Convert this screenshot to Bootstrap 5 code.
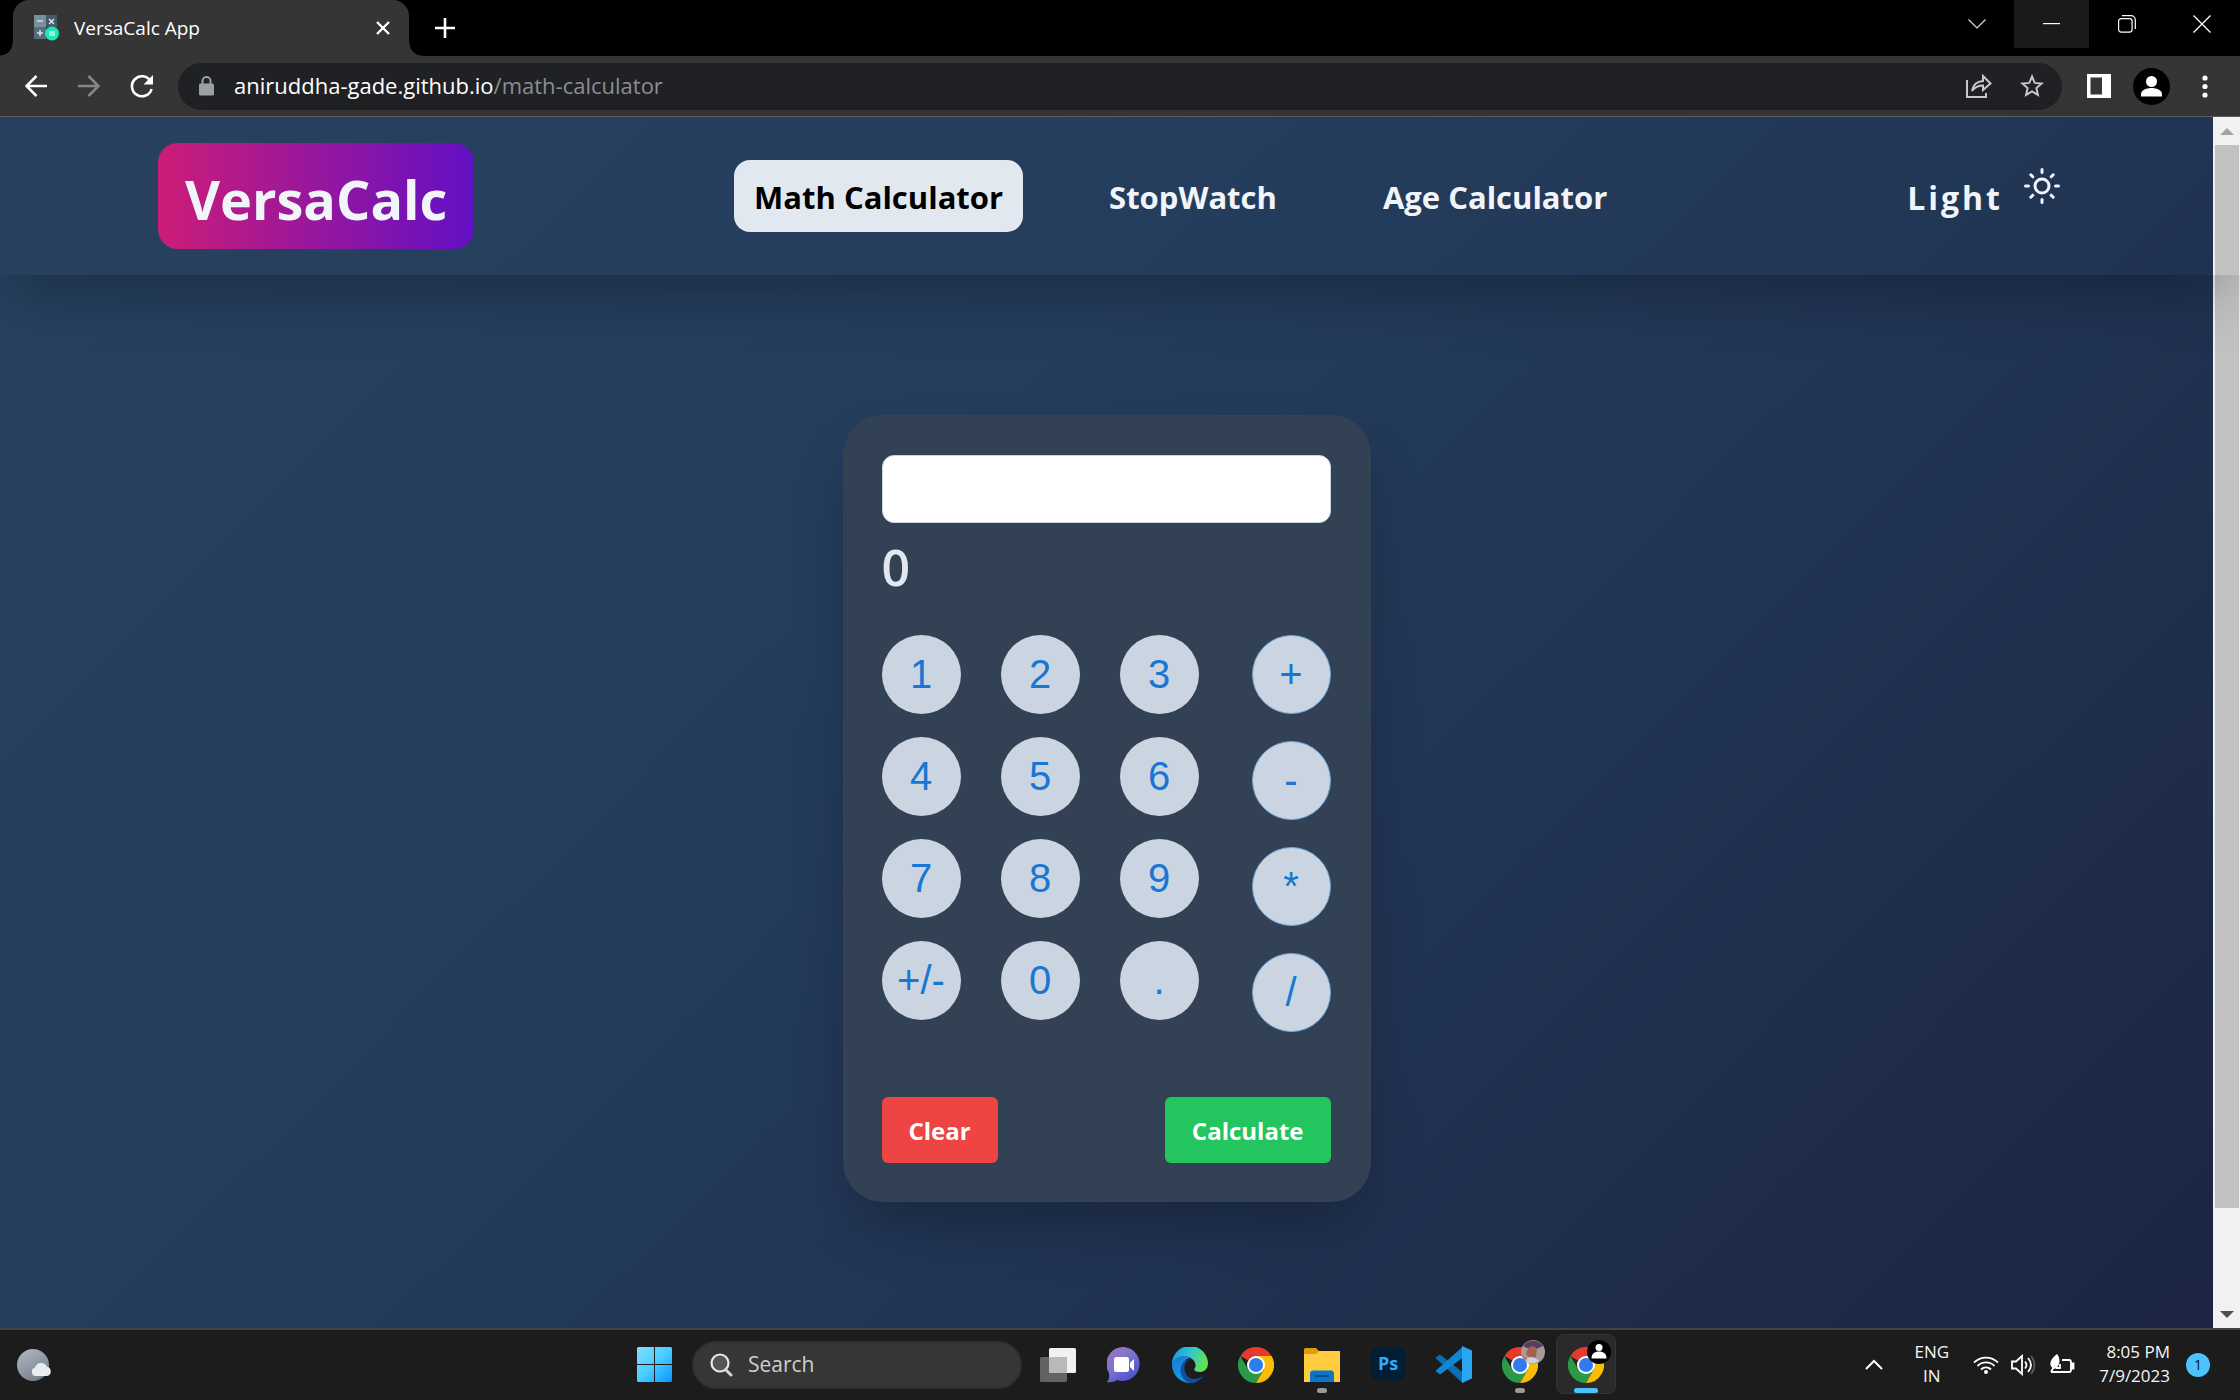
<!DOCTYPE html>
<html lang="en">
<head>
<meta charset="utf-8">
<meta name="viewport" content="width=device-width, initial-scale=1">
<title>VersaCalc App</title>
<link href="https://cdn.jsdelivr.net/npm/bootstrap@5.3.0/dist/css/bootstrap.min.css" rel="stylesheet">
<style>
  body { font-family: "Open Sans", "Noto Sans", sans-serif; background: #1c1c1c; }
  button, a { color: inherit; text-decoration: none; }
  .plain-btn { border: 0; background: none; padding: 0; display: flex; align-items: center; justify-content: center; flex-shrink: 0; }
  svg { display: block; flex-shrink: 0; }

  /* browser window */
  .tab-strip { background: #000; height: 56px; padding: 0 1px 0 13px; color: #fff; }
  .browser-tab { width: 396px; height: 56px; background: #353535; border-radius: 16px 16px 0 0; padding: 0 16px 0 21px; gap: 15px; font-size: 19px; position: relative; }
  .browser-tab::before, .browser-tab::after { content: ""; position: absolute; bottom: 0; width: 13px; height: 13px; }
  .browser-tab::before { left: -13px; background: radial-gradient(circle at 0 0, #000 12px, #353535 13px); }
  .browser-tab::after { right: -13px; background: radial-gradient(circle at 100% 0, #000 12px, #353535 13px); }
  .new-tab { width: 72px; height: 56px; }
  .win-btn { width: 75px; height: 48px; }
  .win-btn.is-hovered { background: #1a1a1a; }
  .tool-bar { background: #353535; height: 61px; border-bottom: 1px solid #5f5f5f; padding: 0 9px; color: #fff; }
  .tool-btn { width: 53px; height: 48px; }
  .tool-end { padding-left: 10px; }
  .omni { background: #202124; height: 47px; border-radius: 24px; margin-left: 10px; padding-left: 21px; padding-right: 4px; font-size: 22px; }
  .omni-url { padding-bottom: 2px; }
  .omni-path { color: #8b8e91; }

  /* site */
  .site { background: linear-gradient(135deg, #27415f 0%, #243d5c 38%, #213353 66%, #1b2541 100%); }
  .site-head { height: 158px; margin-right: -27px; padding: 0 179px 0 158px; color: #f1f5f9; box-shadow: 0 31px 62px -15px rgba(0,0,0,.28); z-index: 1; position: relative; }
  .brand { background: linear-gradient(90deg, #cc1d77, #6210c4); border-radius: 20px; height: 106px; padding: 6px 27px 0; font-size: 54px; font-weight: 700; display: flex; align-items: center; }
  .site-nav { gap: 66px; font-size: 31px; font-weight: 700; }
  .site-link { height: 72px; border-radius: 16px; padding: 3px 20px 0; display: flex; align-items: center; }
  .site-link.active { background: #e2e8f0; color: #000; }
  .theme-btn { font-size: 32px; font-weight: 700; letter-spacing: 3px; padding-left: 20px; gap: 20px; }
  .theme-btn span { padding-top: 4px; }
  .theme-btn svg { margin-bottom: 20px; }

  .calc { width: 528px; margin: 140px auto 0; padding: 40px 40px 39px 39px; border-radius: 40px; background: #334155; box-shadow: 0 31px 62px -15px rgba(0,0,0,.3); }
  .calc-input { width: 100%; height: 68px; border: 1px solid #cbd5e1; border-radius: 12px; background: #fff; padding: 0 16px; font-size: 32px; display: block; }
  .calc-output { display: block; color: #e2e8f0; font-size: 50px; font-weight: 600; line-height: 68px; margin: 10px 0 34px; }
  .digit-grid { display: grid; grid-template-columns: repeat(3, 79px); gap: 23px 40px; }
  .op-col { gap: 27px; }
  .key { width: 79px; height: 79px; border: 0; border-radius: 50%; background: #cbd5e1; color: #1976d2; font: 40px/79px "Liberation Sans", Arial, sans-serif; padding: 0; text-align: center; }
  .op-col .key { border: 1px solid #6fa8de; line-height: 77px; }
  .act { border: 0; border-radius: 6px; height: 66px; padding: 2px 27px 0; font-size: 24px; font-weight: 700; color: #fff; }
  .act-clear { background: #ef4444; }
  .act-run { background: #22c55e; }
  .calc-actions { margin-top: 65px; }

  .scroll-track { width: 27px; background: #f1f1f1; }
  .scroll-arrow { height: 28px; padding-left: 1px; }
  .scroll-thumb { margin: 0 1px 0 2px; background: #c1c1c1; }
  .scroll-fill { flex: 1063; } .scroll-rest { flex: 92; }

  /* taskbar */
  .task-bar { height: 72px; background: #1c1c1c; border-top: 2px solid #434343; color: #f5f5f5; font-size: 17px; padding-bottom: 1px; }
  .task-slot { width: 66px; height: 70px; position: relative; }
  .task-slot.is-open::after { content: ""; position: absolute; bottom: 7px; left: 50%; margin-left: -5px; width: 10px; height: 5px; border-radius: 3px; background: #9a9a9a; }
  .task-slot.is-current::after { width: 24px; margin-left: -12px; background: #4cc2ff; }
  .task-slot.is-current::before { content: ""; position: absolute; inset: 4px 3px 6px; border-radius: 8px; background: #2a2a2a; border: 1px solid #353535; }
  .task-slot svg { position: relative; }
  .task-search { width: 330px; height: 48px; margin: 0 3px 0 5px; border-radius: 24px; background: #363636; border: 2px solid #2f2f2f; padding-left: 16px; gap: 15px; }
  .task-search input { border: 0; background: none; outline: 0; color: #cfcfcf; font-size: 21px; width: 200px; padding: 0; }
  .task-search input::placeholder { color: #cfcfcf; opacity: 1; }
  .tray { padding-right: 30px; }
  .tray-text { line-height: 24px; padding-bottom: 2px; }
  .notice { width: 24px; height: 24px; border-radius: 50%; background: #4cc2ff; color: #111; font-size: 14px; }
</style>
</head>
<body>
<svg width="0" height="0" class="position-absolute" aria-hidden="true">
  <defs>
    <symbol id="chrome" viewBox="0 0 48 48">
      <path d="M24 24 3.2 12A24 24 0 0 1 44.8 12z" fill="#e33b2e"/>
      <path d="M3.2 12A24 24 0 0 0 24 48L34.4 30 24 24 13.6 30z" fill="#2a9a48"/>
      <path d="M44.8 12H24L34.4 30 24 48A24 24 0 0 0 44.8 12z" fill="#fbbc05"/>
      <circle cx="24" cy="24" r="12" fill="#fff"/><circle cx="24" cy="24" r="9.4" fill="#2f7bf0"/>
    </symbol>
  </defs>
</svg>
<div class="min-vh-100 d-flex flex-column">
  <div class="tab-strip d-flex align-items-start">
    <div class="browser-tab d-flex align-items-center">
      <svg width="25" height="26" viewBox="0 0 25 26"><rect width="12" height="12" fill="#78909c"/><rect x="12" width="11" height="12" fill="#455a64"/><rect y="12" width="12" height="12" fill="#546e7a"/><path d="M3 6h6M15 4l5 5m0-5-5 5M3 18h6m-3-3v6" stroke="#d8e2e7" stroke-width="1.6"/><circle cx="18" cy="18.500" r="7" fill="#1de9b6"/><rect x="15" y="16" width="6" height="5" fill="#8ff5dc"/></svg>
      <span class="flex-grow-1">VersaCalc App</span>
      <button class="plain-btn" aria-label="Close tab"><svg width="20" height="20" viewBox="0 0 20 20" stroke="#fff" stroke-width="2.400"><path d="m4 4 12 12m0-12L4 16"/></svg></button>
    </div>
    <button class="plain-btn new-tab" aria-label="New tab"><svg width="20" height="20" viewBox="0 0 20 20" stroke="#fff" stroke-width="2.600"><path d="M10 0v20M0 10h20"/></svg></button>
    <div class="ms-auto d-flex">
      <button class="plain-btn win-btn" aria-label="Search tabs"><svg width="18" height="10" viewBox="0 0 18 10" fill="none" stroke="#ddd" stroke-width="1.200"><path d="m.5.5 8.500 8.500 8.500-8.500"/></svg></button>
      <button class="plain-btn win-btn is-hovered" aria-label="Minimize"><svg width="17" height="2" viewBox="0 0 17 2"><path fill="#fff" d="M0 0h17v1.200H0z"/></svg></button>
      <button class="plain-btn win-btn" aria-label="Restore"><svg width="18" height="18" viewBox="0 0 18 18" fill="none" stroke="#fff" stroke-width="1.200"><rect x=".6" y="3.600" width="13.500" height="13.500" rx="2.500"/><path d="M4 .7h9a4.300 4.300 0 0 1 4.300 4.300v9"/></svg></button>
      <button class="plain-btn win-btn" aria-label="Close"><svg width="18" height="18" viewBox="0 0 18 18" stroke="#fff" stroke-width="1.300"><path d="m.5.5 17 17m0-17-17 17"/></svg></button>
    </div>
  </div>
  <div class="tool-bar d-flex align-items-center">
    <button class="plain-btn tool-btn" aria-label="Back"><svg width="22" height="22" viewBox="0 0 22 22" fill="none" stroke="#fff" stroke-width="2.500"><path d="M22 11H2M11.500 1l-10 10 10 10"/></svg></button>
    <button class="plain-btn tool-btn" aria-label="Forward"><svg width="22" height="22" viewBox="0 0 22 22" fill="none" stroke="#868686" stroke-width="2.500"><path d="M0 11h20M10.500 1l10 10-10 10"/></svg></button>
    <button class="plain-btn tool-btn" aria-label="Reload"><svg width="24" height="24" viewBox="0 0 24 24" fill="none" stroke="#fff" stroke-width="2.600"><path d="M20.500 7A10 10 0 1 0 21.600 15"/><path d="M23 1v9.500h-9.500z" fill="#fff" stroke="none"/></svg></button>
    <div class="omni d-flex align-items-center flex-grow-1">
      <svg width="15" height="20" viewBox="0 0 15 20"><rect y="7.500" width="15" height="12" rx="1.500" fill="#9aa0a6"/><path d="M3.500 8V5a4 4 0 0 1 8 0v3" fill="none" stroke="#9aa0a6" stroke-width="2"/></svg>
      <span class="omni-url ms-3 ps-1 me-auto">aniruddha-gade.github.io<span class="omni-path">/math-calculator</span></span>
      <button class="plain-btn tool-btn" aria-label="Share"><svg width="26" height="24" viewBox="0 0 26 24" fill="none" stroke="#c7c7c7" stroke-width="2"><path d="M1 6v17h19v-4M6 17c1-6 4-9.500 11-10V2l7.500 7.500L17 16v-4.500c-5 0-8 1.500-11 5.500z"/></svg></button>
      <button class="plain-btn tool-btn" aria-label="Bookmark"><svg width="24" height="24" viewBox="0 0 24 24" fill="none" stroke="#c7c7c7" stroke-width="2"><path d="m12 2.500 2.700 6.400 6.900.6-5.200 4.600 1.500 6.800-5.900-3.600-5.900 3.600 1.500-6.800-5.200-4.600 6.900-.6z"/></svg></button>
    </div>
    <div class="d-flex tool-end">
      <button class="plain-btn tool-btn" aria-label="Side panel"><svg width="24" height="24" viewBox="0 0 24 24"><path fill="#fff" fill-rule="evenodd" d="M0 0h24v24H0zM3.500 3.500v17H15v-17z"/></svg></button>
      <button class="plain-btn tool-btn" aria-label="Profile"><svg width="37" height="37" viewBox="0 0 37 37"><circle cx="18.500" cy="18.500" r="18.500"/><circle cx="18.500" cy="13.500" r="5.500" fill="#fff"/><path d="M8 28.500V26c0-4 6-6 10.500-6S29 22 29 26v2.500z" fill="#fff"/></svg></button>
      <button class="plain-btn tool-btn" aria-label="Menu"><svg width="6" height="23" viewBox="0 0 6 23" fill="#fff"><circle cx="3" cy="3" r="2.600"/><circle cx="3" cy="11.500" r="2.600"/><circle cx="3" cy="20" r="2.600"/></svg></button>
    </div>
  </div>

  <div class="d-flex flex-grow-1">
    <div class="site flex-grow-1">
      <header class="site-head d-flex align-items-center justify-content-between">
        <a href="#" class="brand">VersaCalc</a>
        <nav class="site-nav d-flex">
          <a href="#" class="site-link active" aria-current="page">Math Calculator</a>
          <a href="#" class="site-link">StopWatch</a>
          <a href="#" class="site-link">Age Calculator</a>
        </nav>
        <button class="plain-btn theme-btn"><span>Light</span>
          <svg width="38" height="38" viewBox="0 0 38 38" fill="none" stroke="#f1f5f9" stroke-width="3" stroke-linecap="round"><circle cx="19" cy="19" r="7"/><path d="M19 2.500v3M19 32.500v3M2.500 19h3M32.500 19h3M7.800 7.800l2 2M28.200 28.200l2 2M7.800 30.200l2-2M28.200 9.800l2-2"/></svg>
        </button>
      </header>
      <main>
        <form class="calc" onsubmit="return false">
          <input class="calc-input" type="text" aria-label="Number">
          <output class="calc-output">0</output>
          <div class="d-flex justify-content-between align-items-start">
            <div class="digit-grid">
              <button type="button" class="key">1</button><button type="button" class="key">2</button><button type="button" class="key">3</button>
              <button type="button" class="key">4</button><button type="button" class="key">5</button><button type="button" class="key">6</button>
              <button type="button" class="key">7</button><button type="button" class="key">8</button><button type="button" class="key">9</button>
              <button type="button" class="key">+/-</button><button type="button" class="key">0</button><button type="button" class="key">.</button>
            </div>
            <div class="op-col d-flex flex-column">
              <button type="button" class="key">+</button><button type="button" class="key">-</button><button type="button" class="key">*</button><button type="button" class="key">/</button>
            </div>
          </div>
          <div class="calc-actions d-flex justify-content-between">
            <button type="reset" class="act act-clear">Clear</button>
            <button type="submit" class="act act-run">Calculate</button>
          </div>
        </form>
      </main>
    </div>
    <div class="scroll-track d-flex flex-column" aria-hidden="true">
      <div class="scroll-arrow d-flex align-items-center justify-content-center"><svg width="14" height="7" viewBox="0 0 14 7"><path d="M7 0l7 7H0z" fill="#a3a3a3"/></svg></div>
      <div class="scroll-thumb scroll-fill"></div>
      <div class="scroll-rest"></div>
      <div class="scroll-arrow d-flex align-items-center justify-content-center"><svg width="14" height="7" viewBox="0 0 14 7"><path d="M7 7l7-7H0z" fill="#505050"/></svg></div>
    </div>
  </div>

  <footer class="task-bar d-flex align-items-center">
    <div class="flex-fill w-25 ps-3">
      <button class="plain-btn" aria-label="Weather"><svg width="36" height="34" viewBox="0 0 36 34"><defs><linearGradient id="moon" x2=".6" y2="1"><stop stop-color="#b4bcc6"/><stop offset="1" stop-color="#77818c"/></linearGradient></defs><circle cx="17" cy="17" r="16" fill="url(#moon)"/><path d="M19 28a4.500 4.500 0 0 1 0-8.600 6.500 6.500 0 0 1 12-.6A4.700 4.700 0 0 1 31 28z" fill="#e9edf0"/></svg></button>
    </div>
    <div class="d-flex align-items-center">
      <button class="plain-btn task-slot" aria-label="Start"><svg width="35" height="35" viewBox="0 0 35 35"><defs><linearGradient id="win" x1="0" y1="0" x2="35" y2="35" gradientUnits="userSpaceOnUse"><stop stop-color="#83deff"/><stop offset=".5" stop-color="#48cdff"/><stop offset="1" stop-color="#0a95ff"/></linearGradient></defs><path fill="url(#win)" d="M1 0h16v17H0V1zM18 0h16l1 1v16H18zM0 18h17v17H1l-1-1zM18 18h17v16l-1 1H18z"/></svg></button>
      <div class="task-search d-flex align-items-center">
        <svg width="23" height="24" viewBox="0 0 23 24"><circle cx="10" cy="10" r="8.500" fill="#555" stroke="#e8e8e8" stroke-width="2.200"/><path d="m16 17 5 5" stroke="#cfd6dc" stroke-width="3" stroke-linecap="round"/></svg>
        <input type="text" placeholder="Search" aria-label="Search">
      </div>
      <button class="plain-btn task-slot" aria-label="Task view"><svg width="36" height="34" viewBox="0 0 36 34"><rect y="9" width="27" height="25" rx="1.500" fill="#636363"/><rect x="9" width="27" height="25" rx="1.500" fill="#f1f1f1"/><path d="M9 9h18v16H9z" fill="#b9b9b9"/></svg></button>
      <button class="plain-btn task-slot" aria-label="Chat"><svg width="34" height="36" viewBox="0 0 34 36"><defs><linearGradient id="chat" x2=".7" y2="1"><stop stop-color="#a374b4"/><stop offset=".5" stop-color="#7b74d0"/><stop offset="1" stop-color="#4a50c8"/></linearGradient></defs><path d="M17 0a17 17 0 1 1-7 33c-3 2-6 2.500-10 2 2-2 2.500-5 2-9A17 17 0 0 1 17 0z" fill="url(#chat)"/><rect x="7" y="10" width="15" height="15" rx="2.500" fill="#fff"/><path d="m23 16 4-4v12l-4-4z" fill="#fff"/></svg></button>
      <button class="plain-btn task-slot" aria-label="Edge"><svg width="36" height="36" viewBox="0 0 36 36"><defs><linearGradient id="e1" x2="1" y2=".3"><stop stop-color="#1793dc"/><stop offset=".55" stop-color="#33c4d4"/><stop offset="1" stop-color="#5ee356"/></linearGradient><linearGradient id="e2" x2=".3" y2="1"><stop stop-color="#1b7ad0"/><stop offset="1" stop-color="#0aa0ec"/></linearGradient></defs><path d="M0 18A18 18 0 0 1 36 16c0 6-4 9-8 9-5 0-7-2-5-4 1-2 1-6-3-9C14 7 4 9 0 18z" fill="url(#e1)"/><path d="M0 18C2 9 12 7 18 11c-6 1-9 8-6 15 2 5 7 9 10 9.500A18 18 0 0 1 0 18z" fill="url(#e2)"/><path d="M17 13c-5 2-6 8-3 14 4 7 12 6 18 1-4 6-9 8.500-14 8-7-2-11-9-9-16 1-4 4-7 8-7z" fill="#114f9e"/></svg></button>
      <button class="plain-btn task-slot" aria-label="Chrome"><svg width="36" height="36"><use href="#chrome"/></svg></button>
      <button class="plain-btn task-slot is-open" aria-label="File Explorer"><svg width="36" height="34" viewBox="0 0 36 34"><path d="M0 1.500Q0 0 1.500 0H12l3 3h21v10H0z" fill="#df9d0a"/><path d="M0 6h12l3-3h20l1 1v30H0z" fill="#ffcb3f"/><path d="M6 34V26q0-3.500 3-3.500h18q3 0 3 3.500v8z" fill="#0a76c8"/><path d="M11 28h14" stroke="#0b4c88" stroke-width="2"/></svg></button>
      <button class="plain-btn task-slot" aria-label="Photoshop"><svg width="34" height="36" viewBox="0 0 34 36"><rect y="1" width="34" height="32" rx="6" fill="#001e36"/><text x="17" y="23" text-anchor="middle" font-family="Open Sans, sans-serif" font-weight="700" font-size="18" fill="#31a8ff">Ps</text></svg></button>
      <button class="plain-btn task-slot" aria-label="VS Code"><svg width="36" height="37" viewBox="0 0 36 37"><path d="m0 12 4-3 23 18v10z" fill="#0c6fb4" stroke="#0c6fb4" stroke-linejoin="round"/><path d="m0 25 4 3 23-17V1z" fill="#1186cf" stroke="#1186cf" stroke-linejoin="round"/><path d="m26 0 10 4.500v28L26 37z" fill="#2aa5f2"/></svg></button>
      <button class="plain-btn task-slot is-open" aria-label="Chrome, first profile"><svg width="50" height="50" viewBox="0 0 50 50"><use href="#chrome" x="7" y="7" width="36" height="36"/><circle cx="38" cy="12" r="12" fill="#a59a96"/><path d="M28 6a12 12 0 0 1 20 0l-7 3-9-1z" fill="#5d3a63"/><path d="M33 8q6-4 9 1l-1 8-6 2-4-5z" fill="#a3624b"/><path d="M30 19q7-5 14 2a12 12 0 0 1-14 0z" fill="#c5d3da"/><path d="m27 15 5 3-1 4z" fill="#b8765f"/></svg></button>
      <button class="plain-btn task-slot is-open is-current" aria-label="Chrome, second profile"><svg width="50" height="50" viewBox="0 0 50 50"><use href="#chrome" x="7" y="7" width="36" height="36"/><circle cx="38" cy="12" r="12"/><circle cx="38" cy="7.500" r="3.500" fill="#fff"/><path d="M30.500 18.500c0-5 3-7 7.500-7s7.500 2 7.500 7z" fill="#fff"/></svg></button>
    </div>
    <div class="tray flex-fill w-25 d-flex align-items-center justify-content-end">
      <button class="plain-btn me-4" aria-label="Hidden icons"><svg width="18" height="11" viewBox="0 0 18 11" fill="none" stroke="#fff" stroke-width="2"><path d="m1 10 8-8 8 8"/></svg></button>
      <button class="plain-btn tray-text mx-2">ENG<br>IN</button>
      <button class="plain-btn ms-3 me-3 gap-2" aria-label="Network, sound and battery">
        <svg width="26" height="20" viewBox="0 0 26 20" fill="none" stroke="#fff" stroke-width="1.800"><path d="M1 7.500a17 17 0 0 1 24 0M4.500 11a12 12 0 0 1 17 0M8 14.500a7 7 0 0 1 10 0"/><circle cx="13" cy="17" r="2" fill="#fff" stroke="none"/></svg>
        <svg class="ms-1" width="26" height="22" viewBox="0 0 26 22" fill="none" stroke="#fff" stroke-width="1.800"><path d="M1 7.500h4L11 2v18l-6-5.500H1zM14 7.500q3 3.500 0 7M17 4q6 7 0 14"/><path d="M20 2q7 9 0 18" stroke="#5a5a5a"/></svg>
        <svg class="ms-1" width="26" height="24" viewBox="0 0 26 24" fill="none" stroke="#fff" stroke-width="1.800"><path d="M13 7h7a2 2 0 0 1 2 2v8a2 2 0 0 1-2 2H2"/><path d="M22.500 10.500h2v5h-2z" fill="#fff"/><path d="M8 1c4 5 3 12-2 15C-1 14 0 7 8 1z" fill="#fff" stroke="none"/><path d="M2 19 7 10M11 11v4H7"/></svg>
      </button>
      <button class="plain-btn tray-text text-end ms-2">8:05 PM<br>7/9/2023</button>
      <span class="notice d-flex align-items-center justify-content-center ms-3">1</span>
    </div>
  </footer>
</div>
<script src="https://cdn.jsdelivr.net/npm/bootstrap@5.3.0/dist/js/bootstrap.bundle.min.js"></script>
</body>
</html>
